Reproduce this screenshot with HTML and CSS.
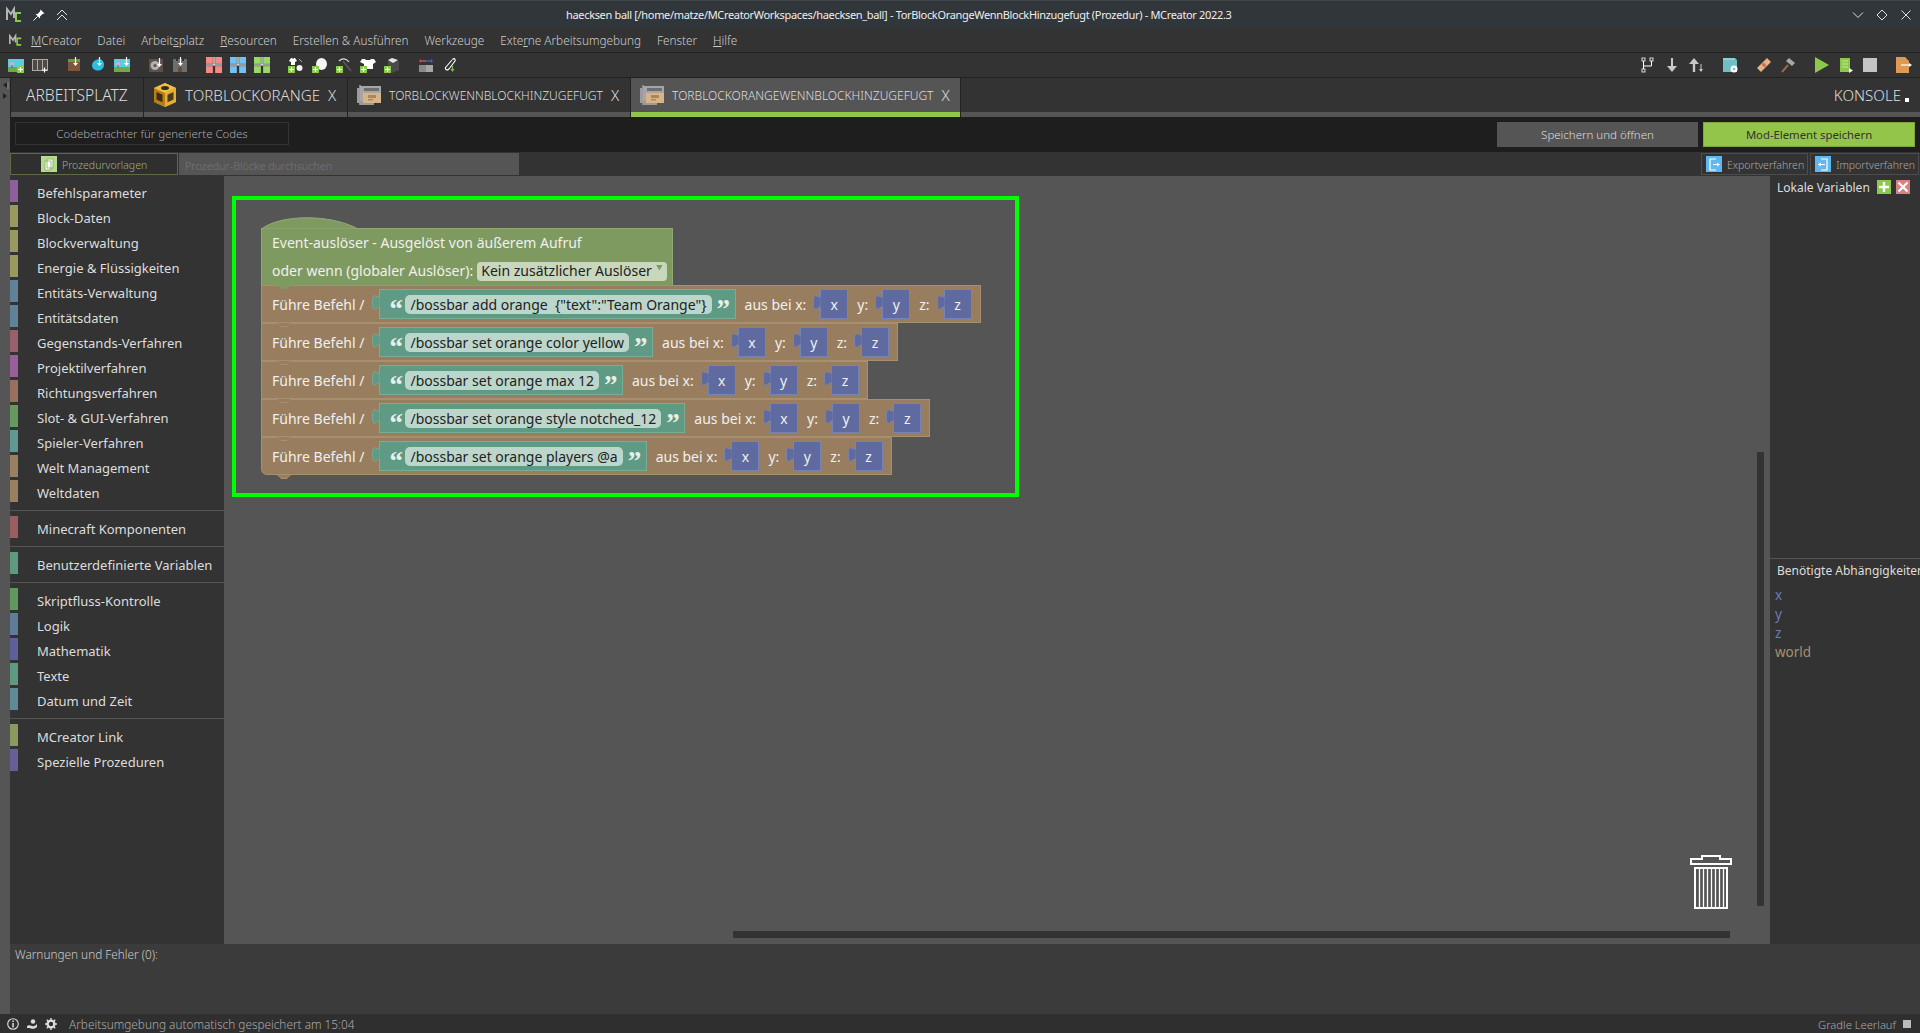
FILE: index.html
```html
<!DOCTYPE html>
<html lang="de">
<head>
<meta charset="utf-8">
<title>MCreator</title>
<link rel="stylesheet" href="styles.css">
</head>
<body>
<svg class="defs" width="0" height="0">
  <symbol id="plus" viewBox="0 0 7 7"><rect x="0" y="0" width="7" height="7" fill="#8cc84b"/><path d="M3.5 1v5M1 3.5h5" stroke="#fff" stroke-width="1.2"/></symbol>
  <symbol id="arrow" viewBox="0 0 7 10"><path d="M3.5 0v8" stroke="#fff" stroke-width="1.2"/><path d="M1 6h5L3.5 9z" fill="#fff"/></symbol>
  <symbol id="pic" viewBox="0 0 16 13"><rect width="16" height="8" fill="#5ccde0"/><rect y="8" width="16" height="5" fill="#72a84a"/><circle cx="4" cy="5" r="2" fill="#f0a0d0"/><rect x="3.5" y="6" width="1" height="3" fill="#4a7a30"/></symbol>
  <symbol id="gridcell" viewBox="0 0 14 14"><rect width="6" height="6" fill="currentColor"/><rect x="8" width="6" height="6" fill="currentColor"/><rect y="8" width="6" height="6" fill="currentColor"/><rect x="8" y="8" width="6" height="6" fill="currentColor"/><path d="M7 0v7M0 7h14" stroke="#fff" stroke-width="1"/></symbol>
  <symbol id="proc" viewBox="0 0 24 22"><path d="M2 1h2v20H2z" fill="#8a8a8a"/><rect x="3" y="2" width="21" height="15" fill="#a6a6a6"/><rect x="3" y="17" width="14" height="4" fill="#9a9a9a"/><rect x="7" y="4" width="15" height="3" fill="#6e6e6e"/><rect x="6" y="9" width="18" height="10" fill="#d9b486"/><rect x="11" y="11" width="8" height="3" fill="#a98758"/><rect x="11" y="15" width="5" height="1.5" fill="#a98758"/><rect x="0" y="4" width="3" height="15" fill="#9c9c9c"/></symbol>
  <symbol id="ptab-t" viewBox="0 0 8 15"><path d="M8 1.5C5.5 3 4.5 1 3 .8 .8 .5.5 3 .5 7.5s.3 7 2.5 6.7C4.5 14 5.5 11 8 12.500z" fill="#5f9b84" stroke="#7fb3a0" stroke-width=".7"/></symbol>
  <symbol id="ptab-v" viewBox="0 0 8 15"><path d="M8 1.5C5.500 3 4.500 1 3 .8 .8 .5.5 3 .5 7.5s.3 7 2.5 6.700C4.500 14 5.500 11 8 12.500z" fill="#5f6ba0" stroke="#7d89bd" stroke-width=".7"/></symbol>
</svg>

<header class="titlebar">
  <svg class="logo-lg" viewBox="0 0 16 17"><path d="M1 14V3l4 5 3-5v9" fill="none" stroke="#b5b5b5" stroke-width="2"/><path d="M15 7H10v8h5" fill="none" stroke="#8cc84b" stroke-width="2"/></svg>
  <svg class="tb-ic pin" viewBox="0 0 12 12"><path d="M7.500.5l4 4-2 .5L7 7.500v2L2.500 5h2L7 2.500z" fill="#fff"/><path d="M4.500 7.500l-4 4" stroke="#fff" stroke-width="1"/></svg>
  <svg class="tb-ic up" viewBox="0 0 12 12"><path d="M1 6l5-5 5 5M1 11l5-5 5 5" fill="none" stroke="#e6e6e6" stroke-width="1"/></svg>
  <div class="wintitle">haecksen ball [/home/matze/MCreatorWorkspaces/haecksen_ball] - TorBlockOrangeWennBlockHinzugefugt (Prozedur) - MCreator 2022.3</div>
  <div class="winbtns">
    <svg class="tb-ic" viewBox="0 0 12 12"><path d="M1 3.500l5 5 5-5" fill="none" stroke="#e0e0e0" stroke-width="1"/></svg>
    <svg class="tb-ic" viewBox="0 0 12 12"><path d="M6 1l5 5-5 5-5-5z" fill="none" stroke="#e0e0e0" stroke-width="1"/></svg>
    <svg class="tb-ic" viewBox="0 0 12 12"><path d="M1.500 1.500l9 9M10.500 1.500l-9 9" fill="none" stroke="#e0e0e0" stroke-width="1"/></svg>
  </div>
</header>

<nav class="menubar">
  <svg class="logo-sm" viewBox="0 0 16 16"><path d="M1 13V3l4 5 3-5v8" fill="none" stroke="#b5b5b5" stroke-width="2"/><path d="M15 6H10v8h5" fill="none" stroke="#8cc84b" stroke-width="2"/></svg>
  <span class="menu"><u>M</u>Creator</span>
  <span class="menu">Datei</span>
  <span class="menu">Arbeit<u>s</u>platz</span>
  <span class="menu"><u>R</u>esourcen</span>
  <span class="menu">Erstellen &amp; Ausführen</span>
  <span class="menu">Werkzeuge</span>
  <span class="menu">Exte<u>r</u>ne Arbeitsumgebung</span>
  <span class="menu">Fenster</span>
  <span class="menu"><u>H</u>ilfe</span>
</nav>

<div class="toolbar">
  <div class="tgroup">
    <span class="tool"><svg viewBox="0 0 16 16"><use href="#pic" y="2" width="16" height="13"/><use href="#plus" x="9" y="9" width="7" height="7"/></svg></span>
    <span class="tool"><svg viewBox="0 0 16 16"><rect x=".5" y="2.500" width="15" height="11" fill="#4a4a4a" stroke="#b0a89c"/><path d="M5.500 3v10M10.500 3v10" stroke="#b0a89c"/><path d="M12.500 10.500v5M10 13h5" stroke="#fff" stroke-width="1.200"/></svg></span>
  </div>
  <div class="tgroup">
    <span class="tool"><svg viewBox="0 0 16 16"><rect x="2" y="2" width="12" height="12" fill="#80563a"/><rect x="2" y="2" width="12" height="3" fill="#5ea03c"/><use href="#arrow" x="6" y="0" width="7" height="10"/></svg></span>
    <span class="tool"><svg viewBox="0 0 16 16"><path d="M7 2.500c4-1 7 1 7 5s-3 6-6 6-6-2-6-5 2-5 5-6z" fill="#2dbfe0"/><use href="#arrow" x="6" y="0" width="7" height="10"/></svg></span>
    <span class="tool"><svg viewBox="0 0 16 16"><use href="#pic" y="2" width="16" height="13"/><use href="#arrow" x="9" y="0" width="7" height="10"/></svg></span>
  </div>
  <div class="tgroup">
    <span class="tool"><svg viewBox="0 0 16 16"><rect x="1" y="2" width="14" height="13" fill="#5e5048"/><circle cx="7" cy="8.500" r="4.500" fill="#b0b0b0"/><circle cx="7" cy="8.500" r="1.500" fill="#5e5048"/><use href="#arrow" x="8" y="1" width="7" height="10"/></svg></span>
    <span class="tool"><svg viewBox="0 0 16 16"><path d="M1 2h3v2h2V2h4v2h2V2h3v13H1z" fill="#6e6e6e"/><rect x="6" y="10" width="4" height="5" fill="#6b4c34"/><use href="#arrow" x="5" y="0" width="7" height="10"/></svg></span>
  </div>
  <div class="tgroup">
    <span class="tool grid-r"><svg viewBox="0 0 14 14"><use href="#gridcell"/></svg></span>
    <span class="tool grid-b"><svg viewBox="0 0 14 14"><use href="#gridcell"/></svg></span>
    <span class="tool grid-g"><svg viewBox="0 0 14 14"><use href="#gridcell"/></svg></span>
  </div>
  <div class="tgroup">
    <span class="tool"><svg viewBox="0 0 16 16"><path d="M3 1h1l1 1 1-1h1l2 3-2 1v3H3V5L1 4z" fill="#fff"/><circle cx="11.500" cy="11" r="3" fill="#f2f2f2"/><path d="M11 2l3 3" stroke="#aaa"/><use href="#plus" y="9" width="7" height="7"/></svg></span>
    <span class="tool"><svg viewBox="0 0 16 16"><ellipse cx="9.500" cy="7" rx="5.500" ry="6" fill="#f4f4f4"/><use href="#plus" y="9" width="7" height="7"/></svg></span>
    <span class="tool"><svg viewBox="0 0 16 16"><path d="M3 4c3-3 7-3 10 1" fill="none" stroke="#ddd" stroke-width="1.200"/><path d="M7 4l8 10" stroke="#555" stroke-width="2"/><use href="#plus" y="9" width="7" height="7"/></svg></span>
    <span class="tool"><svg viewBox="0 0 16 16"><path d="M2 2h3l1 1h4l1-1h3l2 3-3 2v5H4V7L0 5z" fill="#fff"/><use href="#plus" y="9" width="7" height="7"/></svg></span>
    <span class="tool"><svg viewBox="0 0 16 16"><path d="M8 1l7 3v9l-7 3-4-2V4z" fill="#4a4a4a"/><path d="M4 3l4-2 6 2-5 3z" fill="#e6e6e6"/><use href="#plus" y="9" width="7" height="7"/></svg></span>
  </div>
  <div class="tgroup">
    <span class="tool"><svg viewBox="0 0 16 16"><path d="M2 4h12" stroke="#3a70d0" stroke-width="1.200"/><path d="M2 4h6" stroke="#d04a4a" stroke-width="1.200"/><path d="M3 2L1 4l2 2z" fill="#d04a4a"/><path d="M13 2l2 2-2 2z" fill="#3a70d0"/><rect x="1" y="8" width="7" height="7" fill="#8a8a8a"/><rect x="8" y="8" width="7" height="7" fill="#a6a6a6"/></svg></span>
    <span class="tool"><svg viewBox="0 0 16 16"><path d="M11 3c-1-2 3-2 2 1L7 12c-2 2-5 0-3-2l6-7" fill="none" stroke="#fff" stroke-width="1.100"/><path d="M10.500 9v4" stroke="#7cc04a" stroke-width="1.200"/><path d="M8.500 12h4l-2 3z" fill="#7cc04a"/></svg></span>
  </div>
  <div class="tools-right">
    <div class="tgroup">
      <span class="tool"><svg viewBox="0 0 16 16"><path d="M3.500 3v10M3.500 9h8v-6" fill="none" stroke="#fff"/><rect x="2" y="1" width="3" height="3" fill="#333" stroke="#fff" stroke-width=".8"/><rect x="10" y="1" width="3" height="3" fill="#333" stroke="#fff" stroke-width=".8"/><rect x="2" y="12" width="3" height="3" fill="#333" stroke="#fff" stroke-width=".8"/></svg></span>
      <span class="tool"><svg viewBox="0 0 16 16"><path d="M8 1v11" stroke="#c8c8c8" stroke-width="2"/><path d="M3 9h10l-5 6z" fill="#c8c8c8"/></svg></span>
      <span class="tool"><svg viewBox="0 0 16 16"><path d="M6 15V5" stroke="#c8c8c8" stroke-width="2.400"/><path d="M1 7l5-6 5 6z" fill="#c8c8c8"/><path d="M13 7v6" stroke="#c8c8c8"/><path d="M11 12h4l-2 3z" fill="#c8c8c8"/></svg></span>
    </div>
    <div class="tgroup">
      <span class="tool"><svg viewBox="0 0 16 16"><path d="M1 1h12l2 2v12H1z" fill="#6fc0c4"/><path d="M1 1h12v2H1z" fill="#8ad2d4"/><circle cx="12" cy="12" r="3.500" fill="#fff"/><circle cx="12" cy="12" r="1.200" fill="#6fc0c4"/></svg></span>
    </div>
    <div class="tgroup">
      <span class="tool"><svg viewBox="0 0 16 16"><path d="M11 1l4 4L5 15l-4-4z" fill="#eab088"/><path d="M6.500 6.500l3 3" stroke="#c0784a" stroke-width="3"/></svg></span>
      <span class="tool"><svg viewBox="0 0 16 16"><path d="M2 15l6-7" stroke="#9a6a48" stroke-width="2"/><path d="M9 1l6 5-3 3-6-5z" fill="#a8a8a8"/></svg></span>
    </div>
    <div class="tgroup">
      <span class="tool"><svg viewBox="0 0 16 16"><path d="M1 0l14 8-14 8z" fill="#8cc84b"/></svg></span>
      <span class="tool"><svg viewBox="0 0 16 16"><path d="M2 1h10v14H2z" fill="#8cc84b"/><path d="M4 4h6M4 7h6M4 10h6" stroke="#c6e6a0"/><path d="M11 11l4 2.500-4 2.500z" fill="#fff"/></svg></span>
      <span class="tool"><svg viewBox="0 0 16 16"><rect x="1" y="1" width="14" height="14" fill="#c4c4c4"/></svg></span>
    </div>
    <div class="tgroup">
      <span class="tool"><svg viewBox="0 0 16 16"><path d="M0 0h9l4 4v12H0z" fill="#dd9a55"/><path d="M5 8h9" stroke="#fff" stroke-width="1.200"/><path d="M13 6l3 2-3 2z" fill="#fff"/></svg></span>
    </div>
  </div>
</div>

<div class="shell">
  <aside class="strip">
    <svg class="strip-arrows" viewBox="0 0 8 20"><path d="M6 1v6L2 4z" fill="#222"/><path d="M7 1v7" stroke="#bbb" stroke-width=".6"/><path d="M2 12v6l4-3z" fill="#222"/></svg>
  </aside>
  <div class="workspace">
    <div class="tabs">
      <div class="tab tab-first"><span class="t-big t-first">ARBEITSPLATZ</span></div>
      <div class="tab tab-block">
        <svg class="cube" viewBox="0 0 22 24"><path d="M11 0l11 5v14l-11 5L0 19V5z" fill="#d99a1f"/><path d="M11 10L0 5v14l11 5z" fill="#b87e14"/><path d="M11 10l11-5v14l-11 5z" fill="#e6ae30"/><path d="M11 0l11 5-11 5L0 5z" fill="#f0c040"/><ellipse cx="11" cy="5" rx="4" ry="2" fill="#3a2c18"/><path d="M2.500 9l6 2.800v7.500l-6-2.800z" fill="#3a2c18"/><path d="M19.500 9l-6 2.800v7.500l6-2.800z" fill="#4a3a20"/></svg>
        <span class="t-big">TORBLOCKORANGE</span><span class="close">X</span>
      </div>
      <div class="tab tab-proc">
        <svg class="procicon"><use href="#proc"/></svg>
        <span class="t-small">TORBLOCKWENNBLOCKHINZUGEFUGT</span><span class="close">X</span>
      </div>
      <div class="tab tab-proc tab-active">
        <svg class="procicon"><use href="#proc"/></svg>
        <span class="t-small">TORBLOCKORANGEWENNBLOCKHINZUGEFUGT</span><span class="close">X</span>
      </div>
      <div class="tab-fill"><span class="t-big">KONSOLE</span><span class="console-dot"></span></div>
    </div>

    <div class="codebar">
      <div class="codeview">Codebetrachter für generierte Codes</div>
      <div class="btn btn-grey">Speichern und öffnen</div>
      <div class="btn btn-green">Mod-Element speichern</div>
    </div>

    <div class="subbar">
      <div class="subtab">
        <svg class="subicon" viewBox="0 0 16 16"><rect width="16" height="16" fill="#b5dc8e"/><path d="M4 5h6v9H4zM6 3h6v9H6z" fill="#fff" stroke="#7ea85a" stroke-width=".8"/></svg>
        <span class="subtext">Prozedurvorlagen</span>
      </div>
      <div class="search">Prozedur-Blöcke durchsuchen</div>
      <div class="subactions">
        <div class="subaction"><svg class="subicon" viewBox="0 0 16 16"><rect width="16" height="16" fill="#5fb8f0"/><path d="M10 3H4v11h6M7 8.500h6" fill="none" stroke="#fff" stroke-width="1.200"/><path d="M11 6.500l3 2-3 2z" fill="#fff"/></svg><span class="subtext">Exportverfahren</span></div>
        <div class="subaction"><svg class="subicon" viewBox="0 0 16 16"><rect width="16" height="16" fill="#5fb8f0"/><path d="M6 3h6v11H6M3 8.500h7" fill="none" stroke="#fff" stroke-width="1.200"/><path d="M6 6.500l-3 2 3 2z" fill="#fff"/></svg><span class="subtext">Importverfahren</span></div>
      </div>
    </div>

    <div class="center">
      <aside class="palette">
        <div class="pgroup">
          <div class="pitem"><i class="sw c-par"></i>Befehlsparameter</div>
          <div class="pitem"><i class="sw c-blk"></i>Block-Daten</div>
          <div class="pitem"><i class="sw c-blk"></i>Blockverwaltung</div>
          <div class="pitem"><i class="sw c-blk"></i>Energie &amp; Flüssigkeiten</div>
          <div class="pitem"><i class="sw c-ent"></i>Entitäts-Verwaltung</div>
          <div class="pitem"><i class="sw c-ent"></i>Entitätsdaten</div>
          <div class="pitem"><i class="sw c-geg"></i>Gegenstands-Verfahren</div>
          <div class="pitem"><i class="sw c-pro"></i>Projektilverfahren</div>
          <div class="pitem"><i class="sw c-ric"></i>Richtungsverfahren</div>
          <div class="pitem"><i class="sw c-slo"></i>Slot- &amp; GUI-Verfahren</div>
          <div class="pitem"><i class="sw c-spi"></i>Spieler-Verfahren</div>
          <div class="pitem"><i class="sw c-wel"></i>Welt Management</div>
          <div class="pitem"><i class="sw c-wel"></i>Weltdaten</div>
        </div>
        <div class="pgroup"><div class="pitem"><i class="sw c-min"></i>Minecraft Komponenten</div></div>
        <div class="pgroup"><div class="pitem"><i class="sw c-var"></i>Benutzerdefinierte Variablen</div></div>
        <div class="pgroup">
          <div class="pitem"><i class="sw c-skr"></i>Skriptfluss-Kontrolle</div>
          <div class="pitem"><i class="sw c-log"></i>Logik</div>
          <div class="pitem"><i class="sw c-mat"></i>Mathematik</div>
          <div class="pitem"><i class="sw c-tex"></i>Texte</div>
          <div class="pitem"><i class="sw c-dat"></i>Datum und Zeit</div>
        </div>
        <div class="pgroup">
          <div class="pitem"><i class="sw c-lin"></i>MCreator Link</div>
          <div class="pitem"><i class="sw c-spz"></i>Spezielle Prozeduren</div>
        </div>
      </aside>

      <main class="canvas">
        <div class="highlight">
          <div class="stack">
            <div class="hat">
              <svg class="hump" viewBox="0 0 98 12"><path d="M.5 12C20-3 70-3 97 12z" fill="#7f9a60" stroke="#93ab77"/></svg>
              <div class="hatline">Event-auslöser - Ausgelöst von äußerem Aufruf</div>
              <div class="hatline hatline2"><span>oder wenn (globaler Auslöser):</span><span class="dropdown">Kein zusätzlicher Auslöser<i class="caret"></i></span></div>
            </div>
            <div class="brow">
              <span class="lbl">Führe Befehl /</span>
              <svg class="ptab ptab-text"><use href="#ptab-t"/></svg>
              <span class="strblock"><span class="q">“</span><span class="field">/bossbar add orange  {"text":"Team Orange"}</span><span class="q q2">”</span></span>
              <span class="lbl lbl-aus">aus bei x:</span>
              <svg class="ptab ptab-var"><use href="#ptab-v"/></svg><span class="var">x</span>
              <span class="lbl lbl-c">y:</span>
              <svg class="ptab ptab-var"><use href="#ptab-v"/></svg><span class="var">y</span>
              <span class="lbl lbl-c">z:</span>
              <svg class="ptab ptab-var"><use href="#ptab-v"/></svg><span class="var">z</span>
            </div>
            <div class="brow">
              <span class="lbl">Führe Befehl /</span>
              <svg class="ptab ptab-text"><use href="#ptab-t"/></svg>
              <span class="strblock"><span class="q">“</span><span class="field">/bossbar set orange color yellow</span><span class="q q2">”</span></span>
              <span class="lbl lbl-aus">aus bei x:</span>
              <svg class="ptab ptab-var"><use href="#ptab-v"/></svg><span class="var">x</span>
              <span class="lbl lbl-c">y:</span>
              <svg class="ptab ptab-var"><use href="#ptab-v"/></svg><span class="var">y</span>
              <span class="lbl lbl-c">z:</span>
              <svg class="ptab ptab-var"><use href="#ptab-v"/></svg><span class="var">z</span>
            </div>
            <div class="brow">
              <span class="lbl">Führe Befehl /</span>
              <svg class="ptab ptab-text"><use href="#ptab-t"/></svg>
              <span class="strblock"><span class="q">“</span><span class="field">/bossbar set orange max 12</span><span class="q q2">”</span></span>
              <span class="lbl lbl-aus">aus bei x:</span>
              <svg class="ptab ptab-var"><use href="#ptab-v"/></svg><span class="var">x</span>
              <span class="lbl lbl-c">y:</span>
              <svg class="ptab ptab-var"><use href="#ptab-v"/></svg><span class="var">y</span>
              <span class="lbl lbl-c">z:</span>
              <svg class="ptab ptab-var"><use href="#ptab-v"/></svg><span class="var">z</span>
            </div>
            <div class="brow">
              <span class="lbl">Führe Befehl /</span>
              <svg class="ptab ptab-text"><use href="#ptab-t"/></svg>
              <span class="strblock"><span class="q">“</span><span class="field">/bossbar set orange style notched_12</span><span class="q q2">”</span></span>
              <span class="lbl lbl-aus">aus bei x:</span>
              <svg class="ptab ptab-var"><use href="#ptab-v"/></svg><span class="var">x</span>
              <span class="lbl lbl-c">y:</span>
              <svg class="ptab ptab-var"><use href="#ptab-v"/></svg><span class="var">y</span>
              <span class="lbl lbl-c">z:</span>
              <svg class="ptab ptab-var"><use href="#ptab-v"/></svg><span class="var">z</span>
            </div>
            <div class="brow brow-last">
              <span class="lbl">Führe Befehl /</span>
              <svg class="ptab ptab-text"><use href="#ptab-t"/></svg>
              <span class="strblock"><span class="q">“</span><span class="field">/bossbar set orange players @a</span><span class="q q2">”</span></span>
              <span class="lbl lbl-aus">aus bei x:</span>
              <svg class="ptab ptab-var"><use href="#ptab-v"/></svg><span class="var">x</span>
              <span class="lbl lbl-c">y:</span>
              <svg class="ptab ptab-var"><use href="#ptab-v"/></svg><span class="var">y</span>
              <span class="lbl lbl-c">z:</span>
              <svg class="ptab ptab-var"><use href="#ptab-v"/></svg><span class="var">z</span>
            </div>
          </div>
        </div>
        <svg class="trash" viewBox="0 0 42 54">
          <path d="M1 9V4h11V1h18v3h11v5z" fill="none" stroke="#fff" stroke-width="2"/>
          <rect x="5" y="13" width="32" height="40" fill="none" stroke="#fff" stroke-width="2"/>
          <path d="M9.500 13v40M13.500 13v40M17.500 13v40M21.500 13v40M25.500 13v40M29.500 13v40M33.500 13v40" stroke="#fff" stroke-width="1.300"/>
        </svg>
        <div class="scroll-v"></div>
        <div class="scroll-h"></div>
      </main>

      <aside class="sidepanel">
        <div class="locals">
          <div class="locals-head">
            <span>Lokale Variablen</span>
            <svg class="sq" viewBox="0 0 14 14"><rect width="14" height="14" fill="#8cc84b"/><path d="M7 2v10M2 7h10" stroke="#fff" stroke-width="2.400"/></svg>
            <svg class="sq" viewBox="0 0 14 14"><rect width="14" height="14" fill="#d98080"/><path d="M2.500 2.500l9 9M11.500 2.500l-9 9" stroke="#fff" stroke-width="2.200"/></svg>
          </div>
        </div>
        <div class="deps">
          <div class="deps-head">Benötigte Abhängigkeiten</div>
          <div class="dep dep-n">x</div>
          <div class="dep dep-n">y</div>
          <div class="dep dep-n">z</div>
          <div class="dep dep-w">world</div>
        </div>
      </aside>
    </div>

    <div class="warnings">Warnungen und Fehler (0):</div>
  </div>
</div>

<footer class="status">
  <svg class="st-ic" viewBox="0 0 12 12"><circle cx="6" cy="6" r="5.300" fill="none" stroke="#ddd" stroke-width="1.100"/><rect x="5.300" y="5" width="1.500" height="4.500" fill="#ddd"/><rect x="5.300" y="2.500" width="1.500" height="1.500" fill="#ddd"/></svg>
  <svg class="st-ic" viewBox="0 0 12 12"><path d="M1 8c2-1.500 3-.5 5 0 2 .500 3 0 5-2v3c-2 2-5 2-6 1.500S3 10 1 10z" fill="#ddd"/><circle cx="7" cy="3.500" r="2.200" fill="#ddd"/></svg>
  <svg class="st-ic" viewBox="0 0 12 12"><circle cx="6" cy="6" r="3.400" fill="none" stroke="#ddd" stroke-width="2.400"/><path d="M6 0v12M0 6h12M1.800 1.800l8.400 8.400M10.200 1.800l-8.400 8.400" stroke="#ddd" stroke-width="1.400" stroke-dasharray="2 8"/></svg>
  <span class="st-text">Arbeitsumgebung automatisch gespeichert am 15:04</span>
  <span class="st-right">Gradle Leerlauf</span>
  <i class="st-square"></i>
</footer>
</body>
</html>
```

FILE: styles.css
```css
* { box-sizing: border-box; }
html, body { margin: 0; padding: 0; }
body {
  width: 1920px;
  height: 1033px;
  overflow: hidden;
  display: flex;
  flex-direction: column;
  background: #333;
  color: #ddd;
  font-family: "Noto Sans", "Liberation Sans", sans-serif;
  font-size: 12px;
}
.defs { position: absolute; }

.titlebar {
  height: 28px;
  flex: none;
  display: flex;
  align-items: center;
  background: #31363b;
  border-top: 1px solid #3f454b;
  padding-left: 6px;
}
.logo-lg { width: 16px; height: 17px; }
.tb-ic { width: 12px; height: 12px; display: block; }
.pin { margin-left: 11px; }
.up { margin-left: 11px; }
.wintitle { margin-left: 498px; color: #eee; font-size: 11px; letter-spacing: -0.33px; white-space: nowrap; }
.winbtns { margin-left: auto; display: flex; gap: 12px; padding-right: 8px; }

.menubar {
  height: 25px;
  flex: none;
  display: flex;
  align-items: center;
  background: #333;
  border-bottom: 1px solid #222;
  padding-left: 9px;
  font-size: 11.750px;
  font-weight: 300;
  color: #ccc;
}
.logo-sm { width: 13px; height: 14px; margin-right: 1px; }
.menu { padding: 0 8px; white-space: nowrap; }

.toolbar {
  height: 25px;
  flex: none;
  display: flex;
  align-items: center;
  background: #333;
  border-bottom: 1px solid #222;
  padding-left: 4px;
}
.tgroup { display: flex; margin-right: 10px; }
.tool { width: 24px; height: 24px; display: flex; align-items: center; justify-content: center; }
.tool svg { width: 16px; height: 16px; overflow: visible; }
.grid-r { color: #f48a85; }
.grid-b { color: #74c0f2; }
.grid-g { color: #98d86a; }
.tools-right { margin-left: auto; display: flex; }
.tools-right .tgroup:last-child { margin-right: 4px; }

.shell { flex: 1; min-height: 0; display: flex; }
.strip { width: 10px; flex: none; background: #555; position: relative; }
.strip-arrows { position: absolute; left: 1px; top: 3px; width: 8px; height: 20px; }
.workspace { flex: 1; min-width: 0; display: flex; flex-direction: column; }

.tabs {
  height: 39px;
  flex: none;
  display: flex;
  gap: 1px;
  background: #222;
  padding-left: 1px;
}
.tab, .tab-fill {
  display: flex;
  align-items: center;
  background: #333;
  border-bottom: 5px solid #555;
  font-weight: 300;
  white-space: nowrap;
}
.t-big { font-size: 15.100px; color: #ddd; }
.t-first { font-size: 15.600px; }
.t-small { font-size: 12px; color: #ddd; }
.tab-first { width: 132px; padding-left: 15px; }
.tab-block { width: 203px; padding-left: 10px; }
.tab-proc { width: 282px; padding-left: 9px; }
.tab-active { width: 329px; background: #555; border-bottom-color: #93c54b; }
.cube { width: 22px; height: 24px; margin-right: 9px; }
.procicon { width: 24px; height: 22px; margin-right: 8px; }
.close { margin-left: 8px; font-size: 15px; color: #ddd; }
.tab-fill { flex: 1; justify-content: flex-end; padding-right: 11px; position: relative; }
.console-dot { width: 4px; height: 4px; background: #fff; margin-left: 4px; margin-top: 9px; }

.codebar {
  height: 35px;
  flex: none;
  display: flex;
  background: #1e1e1e;
  padding: 5px 5px 0 5px;
  font-size: 11.500px;
  font-weight: 300;
}
.codeview {
  width: 274px;
  height: 23px;
  border: 1px solid #333;
  color: #aaa;
  font-size: 11.400px;
  display: flex;
  align-items: center;
  justify-content: center;
}
.btn { height: 25px; display: flex; align-items: center; justify-content: center; }
.btn-grey { width: 201px; background: #555; color: #ddd; margin-left: auto; }
.btn-green { width: 212px; background: #93c54b; color: #333; margin-left: 5px; border: 1px solid #7da83f; font-weight: 400; font-size: 11.300px; }

.subbar {
  height: 24px;
  flex: none;
  display: flex;
  background: #333;
  padding-top: 1px;
  font-size: 10.500px;
  font-weight: 300;
}
.subtab {
  width: 168px;
  height: 22px;
  display: flex;
  align-items: center;
  padding-left: 30px;
  gap: 5px;
  border: 1px solid #5d6a48;
  background: #2f2f2f;
  color: #9fb27c;
}
.subtext { padding-top: 2px; }
.subicon { width: 16px; height: 16px; flex: none; }
.search {
  width: 340px;
  height: 22px;
  margin-left: 1px;
  background: #555;
  color: #777;
  font-size: 10.800px;
  padding: 5px 0 0 6px;
}
.subactions { margin-left: auto; display: flex; gap: 2px; padding-right: 1px; }
.subaction {
  height: 22px;
  display: flex;
  align-items: center;
  gap: 5px;
  padding: 0 3px 0 4px;
  border: 1px solid #4d4d4d;
  color: #aaa;
}

.center { height: 768px; flex: none; display: flex; }
.palette { width: 214px; flex: none; background: #333; font-size: 13px; color: #ddd; }
.pgroup { padding: 5px 0 8px; border-bottom: 1px solid #555; }
.pgroup:first-child { padding-top: 4px; }
.pgroup:last-child { border-bottom: 0; }
.pitem { height: 22px; display: flex; align-items: flex-start; line-height: 26px; margin-bottom: 3px; white-space: nowrap; }
.pitem:last-child { margin-bottom: 0; }
.sw { width: 8px; height: 22px; margin-right: 19px; flex: none; }
.c-par { background: #8d5f9c; }
.c-blk { background: #99995f; }
.c-ent { background: #5f8299; }
.c-geg { background: #995f6b; }
.c-pro { background: #995f99; }
.c-ric { background: #996f5f; }
.c-slo { background: #669960; }
.c-spi { background: #5f9991; }
.c-wel { background: #998060; }
.c-min { background: #995f60; }
.c-var { background: #5f9980; }
.c-skr { background: #5f995f; }
.c-log { background: #5f7d99; }
.c-mat { background: #5f5f99; }
.c-tex { background: #5f9982; }
.c-dat { background: #5f8a96; }
.c-lin { background: #8a9960; }
.c-spz { background: #675f99; }

.canvas { flex: 1; min-width: 0; background: #555; position: relative; }
.highlight {
  position: absolute;
  left: 8px;
  top: 20px;
  width: 787px;
  height: 301px;
  border: 4px solid #00ff00;
  padding: 28px 0 0 25px;
}
.stack {
  display: flex;
  flex-direction: column;
  align-items: flex-start;
  font-size: 14px;
  color: #f0f0f0;
}
.hat {
  position: relative;
  z-index: 6;
  height: 57px;
  padding: 3px 5px 0 10px;
  background: #7f9a60;
  border: 1px solid #8fa874;
  border-bottom: 0;
  border-top-right-radius: 1px;
}
.hump { position: absolute; left: -1px; top: -12px; width: 98px; height: 12px; }
.hatline { height: 22px; line-height: 22px; white-space: nowrap; }
.hatline2 { margin-top: 6px; height: 22px; display: flex; align-items: center; gap: 4px; }
.dropdown {
  height: 19px;
  display: flex;
  align-items: center;
  padding: 0 4px 0 4px;
  background: #c9d7bd;
  color: #222;
  border-radius: 4px;
}
.caret {
  width: 7px;
  height: 6px;
  margin: -7px 0 0 4px;
  background: #7f9a60;
  clip-path: polygon(0 0, 100% 0, 50% 100%);
}
.brow {
  position: relative;
  height: 38px;
  display: flex;
  align-items: center;
  padding: 0 8px 0 10px;
  background: #987e5f;
  border: 1px solid #a88f70;
  white-space: nowrap;
}
.brow:nth-child(2) { z-index: 5; }
.brow:nth-child(3) { z-index: 4; }
.brow:nth-child(4) { z-index: 3; }
.brow:nth-child(5) { z-index: 2; }
.brow:nth-child(6) { z-index: 1; }
.brow-last { border-bottom-left-radius: 6px; }
.brow::before, .brow::after, .hat::after {
  content: "";
  position: absolute;
  clip-path: polygon(0 0, 100% 0, 70% 100%, 30% 100%);
}
.brow::before { left: 15px; bottom: -5px; width: 14px; height: 4px; background: #a88f70; }
.brow::after { left: 15px; bottom: -4px; width: 14px; height: 3px; background: #987e5f; }
.hat::after { left: 15px; bottom: -4px; width: 14px; height: 4px; background: #7f9a60; }
.lbl { white-space: pre; }
.lbl-aus { margin-left: 9px; }
.lbl-c { margin-left: 9px; }
.ptab { width: 8px; height: 15px; flex: none; margin-top: -4px; position: relative; left: 1px; }
.ptab-text { margin-left: 7px; }
.ptab-var { margin-left: 6px; }
.strblock {
  height: 30px;
  display: flex;
  align-items: center;
  padding: 0 6px 0 9px;
  background: #5f9b84;
  border: 1px solid #78ad98;
}
.q { width: 12px; font-family: "Liberation Serif", serif; font-weight: 700; font-size: 27px; line-height: 30px; height: 30px; color: #e8efe9; margin-right: 4px; padding-top: 5px; }
.q2 { margin: 0 0 0 5px; }
.field {
  height: 19px;
  line-height: 19px;
  padding: 0 5px;
  background: #bcd6cc;
  color: #222;
  border-radius: 5px;
  white-space: pre;
}
.var {
  width: 28px;
  height: 30px;
  display: flex;
  align-items: center;
  justify-content: center;
  background: #5f6ba0;
  border: 1px solid #7683b5;
}

.trash { position: absolute; left: 1466px; top: 679px; width: 42px; height: 54px; }
.scroll-v { position: absolute; left: 1533px; top: 276px; width: 7px; height: 454px; background: #333; }
.scroll-h { position: absolute; left: 509px; top: 755px; width: 997px; height: 7px; background: #333; }

.sidepanel { width: 150px; flex: none; background: #333; display: flex; flex-direction: column; font-size: 12px; overflow: hidden; white-space: nowrap; }
.locals { height: 383px; padding: 2px 0 0 7px; border-bottom: 1px solid #555; }
.locals-head { display: flex; align-items: center; height: 18px; color: #ddd; }
.sq { width: 14px; height: 14px; margin-left: 5px; }
.locals-head .sq:first-of-type { margin-left: 7px; }
.deps { padding: 3px 0 0 5px; }
.deps-head { padding-left: 2px; height: 17px; color: #ddd; margin-bottom: 7px; }
.dep { height: 19px; line-height: 19px; font-size: 13.500px; }
.dep-n { color: #6f7ab8; }
.dep-w { color: #a8906c; }

.warnings {
  flex: 1;
  background: #3b3b3b;
  padding: 2px 0 0 5px;
  font-size: 11.800px;
  font-weight: 300;
  color: #ccc;
}

.status {
  height: 19px;
  flex: none;
  display: flex;
  align-items: center;
  background: #2f2f2f;
  padding: 1px 0 0 7px;
  font-size: 11.800px;
  font-weight: 300;
  color: #aaa;
}
.st-ic { width: 12px; height: 12px; margin-right: 7px; }
.st-text { margin-left: 5px; }
.st-right { margin-left: auto; font-size: 11.200px; }
.st-square { width: 8px; height: 8px; background: #bbb; margin: 0 9px 0 7px; }
```
